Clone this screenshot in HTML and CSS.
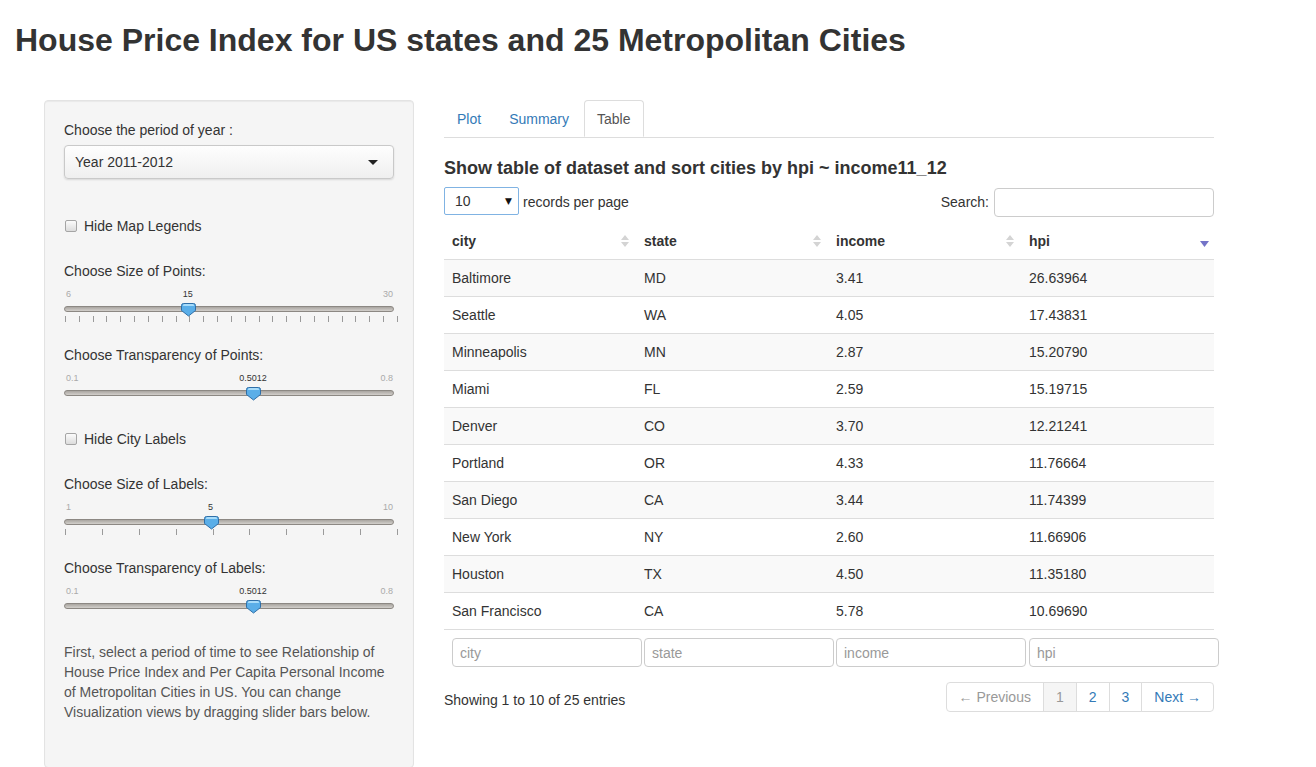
FILE: index.html
```html
<!DOCTYPE html>
<html lang="en">
<head>
    <meta charset="UTF-8">
    <title>House Price Index</title>
    <link rel="stylesheet" href="styles.css">
</head>
<body>
    <h2 class="app-title">House Price Index for US states and 25 Metropolitan Cities</h2>

    <div class="layout">
        <aside class="well">
            <div class="group group-select">
                <label class="control-label">Choose the period of year :</label>
                <div class="selectize">
                    <span>Year 2011-2012</span>
                    <span class="caret"></span>
                </div>
            </div>

            <label class="check"><input type="checkbox"><span>Hide Map Legends</span></label>

            <div class="group">
                <label class="control-label">Choose Size of Points:</label>
                <div class="slider">
                    <div class="slider-nums"><span>6</span><span>30</span></div>
                    <span class="slider-value" style="left: 37.5%">15</span>
                    <div class="track"></div>
                    <svg class="handle" style="left: 37.5%" width="15" height="14" viewBox="0 0 15 14"><path d="M2.5 0.5 h10 a2 2 0 0 1 2 2 v5 l-7 5.5 l-7 -5.5 v-5 a2 2 0 0 1 2 -2 z" fill="#5aaee8" stroke="#2f6fa8"/><path d="M2 3 h11 v-0.5 a1.5 1.5 0 0 0 -1.5 -1.5 h-8 a1.5 1.5 0 0 0 -1.5 1.5 z" fill="#a8dcfa"/></svg>
                    <div class="ticks">
                        <i></i><i></i><i></i><i></i><i></i><i></i><i></i><i></i><i></i><i></i><i></i><i></i><i></i>
                        <i></i><i></i><i></i><i></i><i></i><i></i><i></i><i></i><i></i><i></i><i></i><i></i>
                    </div>
                </div>
            </div>

            <div class="group">
                <label class="control-label">Choose Transparency of Points:</label>
                <div class="slider">
                    <div class="slider-nums"><span>0.1</span><span>0.8</span></div>
                    <span class="slider-value" style="left: 57.3%">0.5012</span>
                    <div class="track"></div>
                    <svg class="handle" style="left: 57.3%" width="15" height="14" viewBox="0 0 15 14"><path d="M2.5 0.5 h10 a2 2 0 0 1 2 2 v5 l-7 5.5 l-7 -5.5 v-5 a2 2 0 0 1 2 -2 z" fill="#5aaee8" stroke="#2f6fa8"/><path d="M2 3 h11 v-0.5 a1.5 1.5 0 0 0 -1.5 -1.5 h-8 a1.5 1.5 0 0 0 -1.5 1.5 z" fill="#a8dcfa"/></svg>
                </div>
            </div>

            <label class="check"><input type="checkbox"><span>Hide City Labels</span></label>

            <div class="group">
                <label class="control-label">Choose Size of Labels:</label>
                <div class="slider">
                    <div class="slider-nums"><span>1</span><span>10</span></div>
                    <span class="slider-value" style="left: 44.4%">5</span>
                    <div class="track"></div>
                    <svg class="handle" style="left: 44.4%" width="15" height="14" viewBox="0 0 15 14"><path d="M2.5 0.5 h10 a2 2 0 0 1 2 2 v5 l-7 5.5 l-7 -5.5 v-5 a2 2 0 0 1 2 -2 z" fill="#5aaee8" stroke="#2f6fa8"/><path d="M2 3 h11 v-0.5 a1.5 1.5 0 0 0 -1.5 -1.5 h-8 a1.5 1.5 0 0 0 -1.5 1.5 z" fill="#a8dcfa"/></svg>
                    <div class="ticks">
                        <i></i><i></i><i></i><i></i><i></i><i></i><i></i><i></i><i></i><i></i>
                    </div>
                </div>
            </div>

            <div class="group">
                <label class="control-label">Choose Transparency of Labels:</label>
                <div class="slider">
                    <div class="slider-nums"><span>0.1</span><span>0.8</span></div>
                    <span class="slider-value" style="left: 57.3%">0.5012</span>
                    <div class="track"></div>
                    <svg class="handle" style="left: 57.3%" width="15" height="14" viewBox="0 0 15 14"><path d="M2.5 0.5 h10 a2 2 0 0 1 2 2 v5 l-7 5.5 l-7 -5.5 v-5 a2 2 0 0 1 2 -2 z" fill="#5aaee8" stroke="#2f6fa8"/><path d="M2 3 h11 v-0.5 a1.5 1.5 0 0 0 -1.5 -1.5 h-8 a1.5 1.5 0 0 0 -1.5 1.5 z" fill="#a8dcfa"/></svg>
                </div>
            </div>

            <p class="help">First, select a period of time to see Relationship of House Price Index and Per Capita Personal Income of Metropolitan Cities in US. You can change Visualization views by dragging slider bars below.</p>
        </aside>

        <main class="main">
            <nav class="tabs">
                <a href="#">Plot</a>
                <a href="#">Summary</a>
                <a href="#" class="active">Table</a>
            </nav>

            <h4 class="table-title">Show table of dataset and sort cities by hpi ~ income11_12</h4>

            <div class="dt-top">
                <div class="dt-length">
                    <span class="len-select">10<span class="len-arrow">&#9660;</span></span>
                    records per page
                </div>
                <div class="dt-search">
                    <span>Search:</span>
                    <input type="text">
                </div>
            </div>

            <table class="dt">
                <colgroup>
                    <col style="width: 192px">
                    <col style="width: 192px">
                    <col style="width: 193px">
                    <col style="width: 193px">
                </colgroup>
                <thead>
                    <tr>
                        <th><div class="th-in"><span>city</span><svg class="sort" width="8" height="12" viewBox="0 0 8 12"><path d="M4 0 L8 5 H0 Z M0 7 H8 L4 12 Z" fill="#d4d4d4"/></svg></div></th>
                        <th><div class="th-in"><span>state</span><svg class="sort" width="8" height="12" viewBox="0 0 8 12"><path d="M4 0 L8 5 H0 Z M0 7 H8 L4 12 Z" fill="#d4d4d4"/></svg></div></th>
                        <th><div class="th-in"><span>income</span><svg class="sort" width="8" height="12" viewBox="0 0 8 12"><path d="M4 0 L8 5 H0 Z M0 7 H8 L4 12 Z" fill="#d4d4d4"/></svg></div></th>
                        <th><div class="th-in"><span>hpi</span><svg class="sort sort-desc" width="9" height="12" viewBox="0 0 9 12"><path d="M0 4 H9 L4.5 10 Z" fill="#7474c8"/></svg></div></th>
                    </tr>
                </thead>
                <tbody>
                    <tr><td>Baltimore</td><td>MD</td><td>3.41</td><td>26.63964</td></tr>
                    <tr><td>Seattle</td><td>WA</td><td>4.05</td><td>17.43831</td></tr>
                    <tr><td>Minneapolis</td><td>MN</td><td>2.87</td><td>15.20790</td></tr>
                    <tr><td>Miami</td><td>FL</td><td>2.59</td><td>15.19715</td></tr>
                    <tr><td>Denver</td><td>CO</td><td>3.70</td><td>12.21241</td></tr>
                    <tr><td>Portland</td><td>OR</td><td>4.33</td><td>11.76664</td></tr>
                    <tr><td>San Diego</td><td>CA</td><td>3.44</td><td>11.74399</td></tr>
                    <tr><td>New York</td><td>NY</td><td>2.60</td><td>11.66906</td></tr>
                    <tr><td>Houston</td><td>TX</td><td>4.50</td><td>11.35180</td></tr>
                    <tr><td>San Francisco</td><td>CA</td><td>5.78</td><td>10.69690</td></tr>
                </tbody>
                <tfoot>
                    <tr>
                        <td><input type="text" placeholder="city"></td>
                        <td><input type="text" placeholder="state"></td>
                        <td><input type="text" placeholder="income"></td>
                        <td><input type="text" placeholder="hpi"></td>
                    </tr>
                </tfoot>
            </table>

            <div class="dt-bottom">
                <div class="dt-info">Showing 1 to 10 of 25 entries</div>
                <ul class="pagination">
                    <li class="disabled"><a href="#">&larr; Previous</a></li>
                    <li class="active"><a href="#">1</a></li>
                    <li><a href="#">2</a></li>
                    <li><a href="#">3</a></li>
                    <li><a href="#">Next &rarr;</a></li>
                </ul>
            </div>
        </main>
    </div>
</body>
</html>
```

FILE: styles.css
```css
html, body {
    overflow: hidden;
}

body {
    margin: 0;
    padding: 0 15px;
    font-family: "Liberation Sans", Arial, sans-serif;
    font-size: 14px;
    line-height: 20px;
    color: #333;
    background: #fff;
}

.app-title {
    font-size: 32px;
    font-weight: bold;
    line-height: 36px;
    margin: 22px 0 42px;
    color: #333;
}

.layout {
    display: flex;
    align-items: flex-start;
    gap: 30px;
    padding-left: 29px;
}

/* sidebar */
.well {
    width: 370px;
    box-sizing: border-box;
    background: #f5f5f5;
    border: 1px solid #e3e3e3;
    border-radius: 4px;
    box-shadow: inset 0 1px 1px rgba(0, 0, 0, 0.05);
    padding: 19px 19px 45px;
}

.group {
    margin-bottom: 19px;
}

.group-select {
    margin-bottom: 37px;
}

.control-label {
    display: block;
    margin-bottom: 5px;
    line-height: 20px;
}

.selectize {
    margin-top: 1px;
    height: 34px;
    width: 330px;
    box-sizing: border-box;
    display: flex;
    align-items: center;
    justify-content: space-between;
    padding: 0 15px 0 10px;
    border: 1px solid #c9c9c9;
    border-radius: 4px;
    background: linear-gradient(#fefefe, #efefef);
    box-shadow: 0 1px 2px rgba(0, 0, 0, 0.12);
}

.caret {
    width: 0;
    height: 0;
    border-top: 5px solid #222;
    border-left: 5px solid transparent;
    border-right: 5px solid transparent;
}

.check {
    display: flex;
    align-items: center;
    gap: 7px;
    height: 20px;
    margin-bottom: 25px;
    padding-left: 1px;
}

.check input {
    appearance: none;
    margin: 0;
    width: 12px;
    height: 12px;
    border: 1px solid #a5a5a5;
    border-radius: 2px;
    background: linear-gradient(#fbfbfb, #dcdcdc);
}

/* sliders */
.slider {
    position: relative;
    height: 40px;
    width: 330px;
}

.slider-nums {
    display: flex;
    justify-content: space-between;
    height: 16px;
    line-height: 16px;
    font-size: 9px;
    color: #aaa;
    padding: 0 1px 0 2px;
}

.slider-value {
    position: absolute;
    top: 0;
    line-height: 16px;
    font-size: 9px;
    color: #333;
    transform: translateX(-50%);
}

.track {
    margin-top: 4px;
    height: 4px;
    border: 1px solid #8c8883;
    border-radius: 3px;
    background: linear-gradient(#a9a5a0, #d2cfcb);
}

.handle {
    position: absolute;
    top: 17px;
    margin-left: -7px;
}

.ticks {
    display: flex;
    justify-content: space-between;
    margin-top: 4px;
    padding: 0 0 0 1px;
    width: 333px;
}

.ticks i {
    display: block;
    width: 1px;
    height: 6px;
    background: #9a9a9a;
}

.help {
    margin: 0;
    color: #555;
}

/* main panel */
.main {
    width: 770px;
}

.tabs {
    display: flex;
    border-bottom: 1px solid #ddd;
    height: 37px;
}

.tabs a {
    display: block;
    padding: 8px 12px;
    margin-right: 2px;
    line-height: 20px;
    border: 1px solid transparent;
    border-radius: 4px 4px 0 0;
    color: #337ab7;
    text-decoration: none;
}

.tabs a.active {
    color: #555;
    background: #fff;
    border-color: #ddd #ddd transparent;
}

.table-title {
    font-size: 18px;
    font-weight: bold;
    line-height: 20px;
    margin: 20px 0 9px;
}

.dt-top {
    display: flex;
    justify-content: space-between;
    align-items: center;
    height: 30px;
}

.dt-length {
    display: flex;
    align-items: center;
    gap: 4px;
}

.len-select {
    display: flex;
    justify-content: space-between;
    align-items: center;
    width: 75px;
    height: 28px;
    box-sizing: border-box;
    padding: 0 6px 0 10px;
    border: 1px solid #80b3e3;
    border-radius: 2px;
    background: #fff;
    margin-top: -2px;
}

.len-arrow {
    font-family: "DejaVu Sans", sans-serif;
    font-size: 9px;
    color: #111;
}

.dt-search {
    display: flex;
    align-items: center;
    gap: 5px;
}

.dt-search input {
    width: 220px;
    height: 29px;
    box-sizing: border-box;
    border: 1px solid #ccc;
    border-radius: 4px;
    margin: 1px 0 0;
}

.dt {
    width: 770px;
    table-layout: fixed;
    border-collapse: collapse;
    margin-top: 6px;
}

.dt th {
    padding: 8px 7px 8px 8px;
    text-align: left;
    font-weight: bold;
    border-bottom: 1px solid #ddd;
}

.th-in {
    display: flex;
    justify-content: space-between;
    align-items: center;
}

.sort-desc {
    margin: 4px -2px 0 0;
}

.dt tbody td {
    padding: 8px;
    border-bottom: 1px solid #ddd;
}

.dt tbody tr:nth-child(odd) {
    background: #f9f9f9;
}

.dt tfoot td {
    padding: 8px 0 0 8px;
}

.dt tfoot input {
    width: 190px;
    height: 29px;
    box-sizing: border-box;
    padding: 4px 7px;
    border: 1px solid #ccc;
    border-radius: 4px;
    font-family: inherit;
    font-size: 14px;
    color: #555;
}

.dt tfoot input::placeholder {
    color: #999;
}

.dt-bottom {
    display: flex;
    justify-content: space-between;
    align-items: flex-start;
    margin-top: 15px;
}

.dt-info {
    padding-top: 8px;
}

.pagination {
    display: flex;
    list-style: none;
    margin: 0;
    padding: 0;
}

.pagination a {
    display: block;
    padding: 4px 12px;
    line-height: 20px;
    border: 1px solid #ddd;
    margin-left: -1px;
    color: #337ab7;
    text-decoration: none;
    background: #fff;
}

.pagination li:first-child a {
    border-radius: 4px 0 0 4px;
}

.pagination li:last-child a {
    border-radius: 0 4px 4px 0;
}

.pagination .disabled a {
    color: #999;
}

.pagination .active a {
    color: #999;
    background: #f5f5f5;
}
```
